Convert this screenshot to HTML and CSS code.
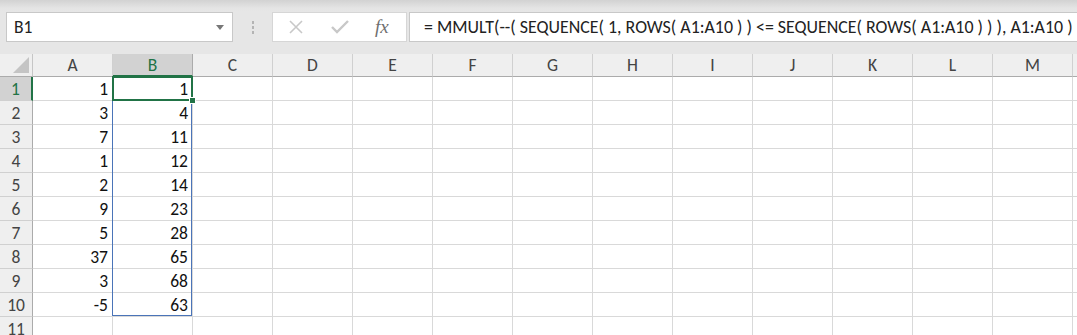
FILE: index.html
```html
<!DOCTYPE html>
<html lang="en">
<head>
    <meta charset="UTF-8">
    <title>sheet</title>
    <link rel="stylesheet" href="styles.css">
</head>
<body>
    <div class="bar">
        <div class="namebox">
            <span>B1</span>
            <svg class="arrow" width="8" height="5" viewBox="0 0 8 5"><path d="M0 0h8L4 5z" fill="#777"/></svg>
        </div>
        <div class="dots"><i></i><i></i><i></i></div>
        <div class="btns">
            <svg width="16" height="16" viewBox="0 0 16 16"><path d="M2 2L14 14M14 2L2 14" stroke="#c8c8c8" stroke-width="1.6"/></svg>
            <svg width="18" height="16" viewBox="0 0 18 16"><path d="M1 8l5 5L17 2" stroke="#c8c8c8" stroke-width="2.4" fill="none"/></svg>
            <span class="fx">fx</span>
        </div>
        <div class="formula">= MMULT(--( SEQUENCE( 1, ROWS( A1:A10 ) ) &lt;= SEQUENCE( ROWS( A1:A10 ) ) ), A1:A10 )</div>
    </div>

    <div class="sheet">
        <div class="corner"></div>
        <div class="ch">A</div><div class="ch sel">B</div><div class="ch">C</div><div class="ch">D</div>
        <div class="ch">E</div><div class="ch">F</div><div class="ch">G</div><div class="ch">H</div>
        <div class="ch">I</div><div class="ch">J</div><div class="ch">K</div><div class="ch">L</div>
        <div class="ch">M</div><div class="ch last"></div>
    </div>
    <div class="sheet body" id="rows">
        <div class="range"></div>
        <div class="active"><i></i></div>
    </div>

    <script>
        var a = [1, 3, 7, 1, 2, 9, 5, 37, 3, -5];
        var rows = document.getElementById("rows");
        var sum = 0;
        for (var r = 1; r <= 11; r++) {
            var h = document.createElement("div");
            h.className = r == 1 ? "rh sel" : "rh";
            h.textContent = r;
            rows.appendChild(h);
            for (var c = 0; c < 14; c++) {
                var d = document.createElement("div");
                d.className = c == 13 ? "cell last" : "cell";
                if (r <= 10 && c == 0) d.textContent = a[r - 1];
                if (r <= 10 && c == 1) { sum += a[r - 1]; d.textContent = sum; }
                rows.appendChild(d);
            }
        }
    </script>
</body>
</html>
```

FILE: styles.css
```css
body {
    margin: 0;
    background: #e6e6e6;
    font-family: Carlito, "Open Sans", "Liberation Sans", sans-serif;
    overflow: hidden;
}
.bar {
    height: 54px;
    display: flex;
    align-items: flex-start;
    padding-top: 12px;
    box-sizing: border-box;
    background: linear-gradient(#d2d2d2 0px, #e4e4e4 8px, #e6e6e6 12px);
}
.namebox {
    margin-left: 6px;
    width: 227px;
    height: 30px;
    box-sizing: border-box;
    background: #fff;
    border: 1px solid #c8c8c8;
    display: flex;
    align-items: center;
    justify-content: space-between;
    padding: 0 8px 0 7px;
    font-size: 17.5px;
    color: #222;
}
.dots {
    width: 39px;
    height: 30px;
    display: flex;
    flex-direction: column;
    align-items: center;
    justify-content: center;
    gap: 2px;
}
.dots i {
    width: 2px;
    height: 3px;
    background: #b4b4b4;
}
.btns {
    width: 135px;
    height: 30px;
    box-sizing: border-box;
    background: #fff;
    border: 1px solid #d6d6d6;
    display: flex;
    align-items: center;
    justify-content: space-around;
    padding: 0 4px 0 2px;
}
.fx {
    font-family: "Liberation Serif", serif;
    font-style: italic;
    font-size: 19px;
    color: #6f6f6f;
}
.formula {
    margin-left: 2px;
    flex: 1;
    height: 30px;
    box-sizing: border-box;
    background: #fff;
    border: 1px solid #c8c8c8;
    border-right: 0;
    padding-left: 14px;
    line-height: 28px;
    font-size: 17.9px;
    color: #222;
    white-space: nowrap;
    overflow: hidden;
}
.sheet {
    display: grid;
    grid-template-columns: 33px repeat(13, 80px) 1fr;
    grid-auto-rows: 23px;
    background: #fff;
}
.sheet.body {
    grid-auto-rows: 24px;
    position: relative;
}
.corner, .ch, .rh {
    background: #efefef;
    color: #444;
    font-size: 17.5px;
    box-sizing: border-box;
}
.corner {
    border-right: 1px solid #c6c6c6;
    border-bottom: 1px solid #ababab;
    position: relative;
}
.corner::after {
    content: "";
    position: absolute;
    right: 3px;
    bottom: 3px;
    border-style: solid;
    border-width: 0 0 16px 16px;
    border-color: transparent transparent #c4c4c4 transparent;
}
.ch {
    border-right: 1px solid #d0d0d0;
    border-bottom: 1px solid #ababab;
    text-align: center;
    line-height: 23px;
}
.ch.sel, .rh.sel {
    background: #d2d2d2;
    color: #217346;
}
.ch.sel {
    border-bottom: 2px solid #217346;
    border-right-color: #ababab;
}
.rh {
    border-right: 1px solid #ababab;
    border-bottom: 1px solid #d0d0d0;
    text-align: center;
    line-height: 24px;
}
.rh.sel {
    border-right: 2px solid #217346;
}
.cell {
    border-right: 1px solid #d9d9d9;
    border-bottom: 1px solid #d9d9d9;
    box-sizing: border-box;
    text-align: right;
    padding-right: 4px;
    font-size: 17.5px;
    line-height: 24px;
    color: #111;
}
.last {
    border-right: 0;
}
.range {
    position: absolute;
    left: 112px;
    top: 23px;
    width: 80px;
    height: 216px;
    border: 1px solid #4a74b8;
    box-sizing: border-box;
}
.active {
    position: absolute;
    left: 112px;
    top: -1px;
    width: 81px;
    height: 25px;
    border: 2px solid #217346;
    box-sizing: border-box;
    z-index: 2;
}
.active i {
    position: absolute;
    right: -5px;
    bottom: -5px;
    width: 5px;
    height: 5px;
    background: #217346;
    border: 1px solid #fff;
}
```
